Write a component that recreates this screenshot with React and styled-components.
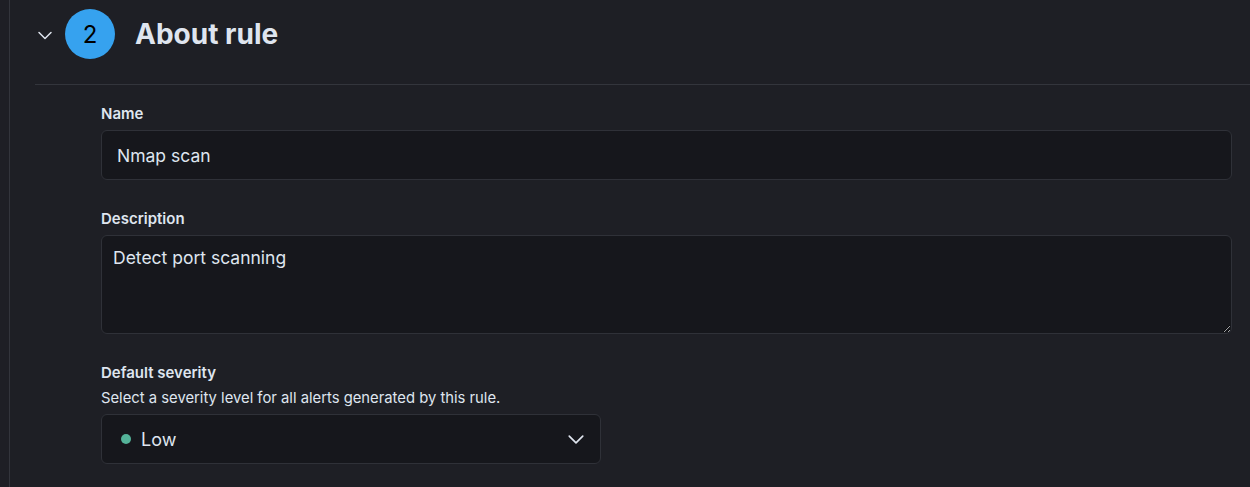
import styled, { createGlobalStyle } from "styled-components";

const GlobalStyle = createGlobalStyle`
  html, body {
    margin: 0;
    padding: 0;
    background: #1e1f25;
    font-family: Inter, "Noto Sans", sans-serif;
    color: #dfe5ef;
  }
`;

function ChevronDown({ size = 16 }) {
  return (
    <svg width={size} height={size} viewBox="0 0 16 16" fill="none">
      <path
        d="M2 5.5l6 6 6-6"
        stroke="#dfe5ef"
        strokeWidth="1.5"
        strokeLinecap="round"
        strokeLinejoin="round"
      />
    </svg>
  );
}

export default function App() {
  return (
    <>
      <GlobalStyle />
      <Page>
        <Step>
          <StepHeader>
            <Toggle>
              <ChevronDown />
            </Toggle>
            <StepNumber>2</StepNumber>
            <StepTitle>About rule</StepTitle>
          </StepHeader>
          <Divider />
          <StepBody>
            <Field>
              <Label htmlFor="rule-name">Name</Label>
              <TextInput id="rule-name" defaultValue="Nmap scan" />
            </Field>
            <Field>
              <Label htmlFor="rule-description">Description</Label>
              <TextArea
                id="rule-description"
                defaultValue="Detect port scanning"
              />
            </Field>
            <Field>
              <Label>Default severity</Label>
              <HelpText>
                Select a severity level for all alerts generated by this rule.
              </HelpText>
              <Select>
                <SelectValue>
                  <Dot $color="#54b399" />
                  Low
                </SelectValue>
                <ChevronDown size={18} />
              </Select>
            </Field>
          </StepBody>
        </Step>
      </Page>
    </>
  );
}

const Page = styled.div`
  padding-left: 9px;
  min-height: 487px;
  box-sizing: border-box;
`;

const Step = styled.section`
  border-left: 1px solid #33353c;
  min-height: 487px;
  padding-left: 25px;
  box-sizing: border-box;
`;

const StepHeader = styled.div`
  display: flex;
  align-items: center;
  height: 68px;
  padding-left: 1px;
`;

const Toggle = styled.button`
  display: flex;
  align-items: center;
  justify-content: center;
  width: 18px;
  height: 18px;
  padding: 0;
  border: none;
  background: none;
  margin-right: 11px;
  margin-top: 2px;
`;

const StepNumber = styled.div`
  width: 50px;
  height: 50px;
  border-radius: 50%;
  background: #36a2ef;
  color: #000000;
  display: flex;
  align-items: center;
  justify-content: center;
  font-size: 24px;
  margin-right: 20px;
`;

const StepTitle = styled.h2`
  margin: 0;
  font-size: 28px;
  font-weight: 700;
  color: #dfe5ef;
`;

const Divider = styled.hr`
  margin: 16px 0 0;
  border: none;
  border-top: 1px solid #33353c;
`;

const StepBody = styled.div`
  padding: 19px 18px 0 66px;
  display: flex;
  flex-direction: column;
  gap: 29px;
`;

const Field = styled.div`
  display: flex;
  flex-direction: column;
`;

const Label = styled.label`
  font-size: 15px;
  font-weight: 600;
  line-height: 20px;
  color: #dfe5ef;
  margin-bottom: 6px;
`;

const HelpText = styled.div`
  font-size: 14.8px;
  line-height: 20px;
  color: #dfe5ef;
  margin-top: -1px;
  margin-bottom: 6px;
`;

const controlBase = `
  box-sizing: border-box;
  width: 100%;
  background: #16171c;
  border: 1px solid #2f3138;
  border-radius: 6px;
  color: #dfe5ef;
  font-family: Inter, "Noto Sans", sans-serif;
  font-size: 18px;
  outline: none;
`;

const TextInput = styled.input`
  ${controlBase}
  height: 50px;
  padding: 0 15px;
  font-size: 17.5px;
`;

const TextArea = styled.textarea`
  ${controlBase}
  height: 99px;
  padding: 11px 11px;
  resize: vertical;
  font-size: 17.5px;
  line-height: 22px;
  display: block;
`;

const Select = styled.div`
  ${controlBase}
  width: 500px;
  height: 50px;
  padding: 0 15px 0 19px;
  display: flex;
  align-items: center;
  justify-content: space-between;
`;

const SelectValue = styled.span`
  display: flex;
  align-items: center;
  gap: 10px;
`;

const Dot = styled.span`
  width: 10px;
  height: 10px;
  border-radius: 50%;
  background: ${(p) => p.$color};
`;
